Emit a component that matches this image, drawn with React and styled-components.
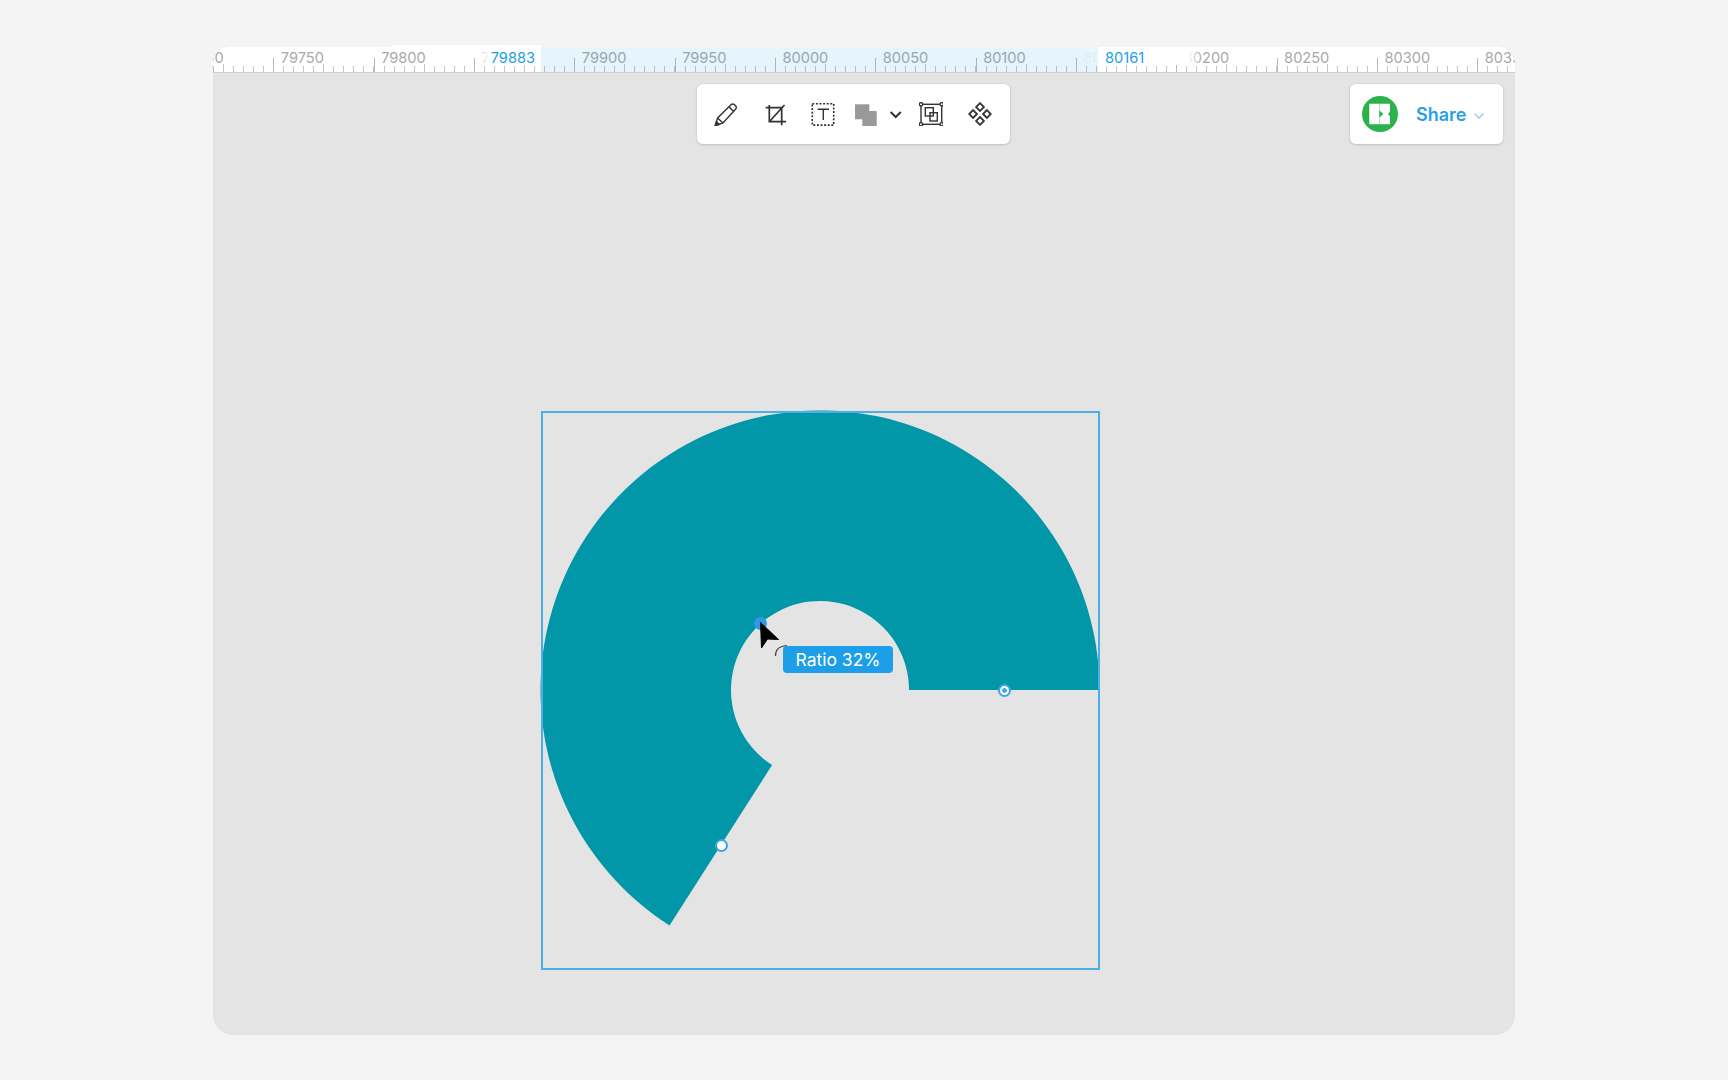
import React from "react";
import styled, { createGlobalStyle } from "styled-components";

const TICKS = [79700, 79750, 79800, 79850, 79900, 79950, 80000, 80050, 80100, 80150, 80200, 80250, 80300, 80350];

const GlobalStyle = createGlobalStyle`
    html, body {
        margin: 0;
        background: #f4f4f4;
    }
    body {
        font-family: Inter, "Liberation Sans", sans-serif;
    }
`;

const Page = styled.div`
    box-sizing: border-box;
    width: 1728px;
    height: 1080px;
    padding: 47px 213px 45px;
`;

const Canvas = styled.div`
    position: relative;
    height: 988px;
    background: #e4e4e4;
    border-radius: 16px 16px 20px 20px;
`;

const Ruler = styled.div`
    position: relative;
    height: 25px;
    background: #fff;
    border-bottom: 1px solid #cfcfcf;
    border-radius: 16px 16px 0 0;
`;

const RulerClip = styled.div`
    height: 100%;
    overflow: hidden;
    border-radius: 16px 16px 0 0;
`;

const RulerTrack = styled.div`
    display: flex;
    margin-left: -40px;
    height: 100%;
`;

const RulerCell = styled.div`
    position: relative;
    flex: 0 0 100.33px;
    box-sizing: border-box;
    padding: 2px 0 0 7.5px;
    font-size: 14.6px;
    line-height: 18px;
    color: #a9a9a9;
    white-space: nowrap;
    background: repeating-linear-gradient(to right, #c4c4c4 0 1px, transparent 1px 10.033px) left bottom / 100% 6px no-repeat;

    &::before {
        content: "";
        position: absolute;
        left: 0;
        bottom: 0;
        width: 1px;
        height: 14px;
        background: #b8b8b8;
    }

    &::after {
        content: "";
        position: absolute;
        left: 50px;
        bottom: 0;
        width: 1px;
        height: 8px;
        background: #c4c4c4;
    }
`;

const RulerBand = styled.div`
    position: absolute;
    left: 328px;
    top: 0;
    width: 557px;
    height: 25px;
    background: rgba(28, 158, 232, 0.11);
`;

const RulerVeil = styled.div`
    position: absolute;
    left: 871px;
    top: 0;
    width: 14px;
    height: 18px;
    background: rgba(231, 245, 253, 0.88);
`;

const RulerBump = styled.div`
    position: absolute;
    left: 180px;
    top: -2px;
    width: 148px;
    height: 2px;
    background: #fff;
`;

const RulerMark = styled.div`
    position: absolute;
    top: 0;
    left: ${({ $left }) => $left}px;
    width: ${({ $width }) => $width}px;
    height: 18px;
    box-sizing: border-box;
    padding: 2px ${({ $end }) => ($end ? "6px" : "0")} 0 ${({ $end }) => ($end ? "0" : "7px")};
    text-align: ${({ $end }) => ($end ? "right" : "left")};
    font-size: 14.6px;
    line-height: 18px;
    color: #1c9ee8;
    background: linear-gradient(${({ $end }) => ($end ? "to left" : "to right")}, #fff 0, #fff ${({ $solid }) => $solid}px, rgba(255, 255, 255, 0) 100%);
`;

const TopRow = styled.div`
    display: flex;
    justify-content: space-between;
    padding: 11px 12px 0 484px;
`;

const Panel = styled.div`
    display: flex;
    align-items: center;
    box-sizing: border-box;
    height: 60px;
    background: #fff;
    border-radius: 6px;
    box-shadow: 0 0 0 1px rgba(0, 0, 0, 0.03), 0 1px 3px rgba(0, 0, 0, 0.12);
`;

const Toolbar = styled(Panel)`
    width: 313px;
    padding-left: 5px;
`;

const ToolButton = styled.div`
    display: flex;
    align-items: center;
    justify-content: center;
    flex: 0 0 ${({ $w }) => $w}px;
    min-width: 0;
    height: 100%;

    svg {
        display: block;
        flex: none;
        fill: none;
        stroke: #333;
        stroke-width: ${({ $stroke }) => $stroke || 1.4};
    }
`;

const SharePanel = styled(Panel)`
    width: 153px;
    padding-left: 12px;
`;

const Avatar = styled.div`
    flex: 0 0 36px;
    height: 36px;
    border-radius: 50%;
    background: #2bb24a;

    svg {
        display: block;
    }
`;

const ShareLabel = styled.div`
    margin-left: 18px;
    font-size: 18px;
    font-weight: 600;
    color: #2a9fe8;
`;

const ShareCaret = styled.svg`
    margin-left: 8px;
    margin-top: 3px;
`;

const Frame = styled.div`
    position: absolute;
    left: 328px;
    top: 364px;
    width: 558px;
    height: 558px;

    &::after {
        content: "";
        position: absolute;
        inset: -0.5px -1px -1px -0.5px;
        border: 2px solid #4aafe6;
        pointer-events: none;
    }
`;

const Shape = styled.svg`
    display: block;
    overflow: visible;
`;

const Handle = styled.div`
    position: absolute;
    z-index: 1;
    left: ${({ $x }) => $x}px;
    top: ${({ $y }) => $y}px;
    box-sizing: border-box;
    width: 13px;
    height: 13px;
    margin: -6.5px 0 0 -6.5px;
    border-radius: 50%;
    border: 2px solid #3aa6ea;
    background: ${({ $dot }) => ($dot ? "radial-gradient(circle, #3aa6ea 0 2px, #fff 2.6px)" : "#fff")};
`;

const RatioDot = styled.div`
    position: absolute;
    left: 213px;
    top: 206px;
    width: 13px;
    height: 13px;
    border-radius: 50%;
    background: #2b9be8;
`;

const Pointer = styled.svg`
    position: absolute;
    left: 218px;
    top: 210px;
    z-index: 2;
`;

const Tooltip = styled.div`
    position: absolute;
    left: 242px;
    top: 235px;
    width: 110px;
    height: 27px;
    border-radius: 4px;
    background: #1c9ee8;
    color: #fff;
    font-size: 17.5px;
    line-height: 28px;
    text-align: center;
`;

const App = () => {
    return (
        <React.Fragment>
            <GlobalStyle />
            <Page>
                <Canvas>
                    <Ruler>
                        <RulerClip>
                            <RulerTrack>
                                {TICKS.map((tick) => (
                                    <RulerCell key={tick}>{tick}</RulerCell>
                                ))}
                            </RulerTrack>
                        </RulerClip>
                        <RulerBand />
                        <RulerVeil />
                        <RulerBump />
                        <RulerMark $end $left={262} $width={66} $solid={52}>79883</RulerMark>
                        <RulerMark $left={885} $width={104} $solid={90}>80161</RulerMark>
                    </Ruler>

                    <TopRow>
                        <Toolbar>
                            <ToolButton $w={48}>
                                <svg width="24" height="24" viewBox="0 0 24 24">
                                    <path d="M1.2 23.6 3.6 16 17 2.8a2.5 2.5 0 0 1 3.5 0l1 1a2.5 2.5 0 0 1 0 3.5L9 20.9Z" />
                                    <path d="M3.6 16 9 20.9M15 4.8l5 5" />
                                    <path d="M1.2 23.6l1.2-4 2.9 2.8Z" fill="#333" />
                                </svg>
                            </ToolButton>
                            <ToolButton $w={50} $stroke={1.7}>
                                <svg width="24" height="24" viewBox="0 0 24 24">
                                    <path d="M2.7 5.7H18.7V23.3M6.3 3V19.7H23M6.3 19.7 21.5 3" />
                                </svg>
                            </ToolButton>
                            <ToolButton $w={46}>
                                <svg width="24" height="24" viewBox="0 0 24 24">
                                    <rect x="1.3" y="1.7" width="21.4" height="21.4" strokeDasharray="2 1.6" style={{ strokeWidth: 1.6 }} />
                                    <path d="M6.7 7.3H18M12.3 7.3V18" />
                                </svg>
                            </ToolButton>
                            <ToolButton $w={40}>
                                <svg width="24" height="24" viewBox="0 0 24 24">
                                    <rect x="1" y="2.3" width="14.3" height="15" fill="#999" stroke="none" />
                                    <rect x="8.3" y="9" width="14.4" height="15" fill="#999" stroke="none" />
                                </svg>
                            </ToolButton>
                            <ToolButton $w={20} $stroke={2}>
                                <svg width="24" height="24" viewBox="0 0 24 24">
                                    <path d="M6.6 10 11.7 15 16.8 10" />
                                </svg>
                            </ToolButton>
                            <ToolButton $w={50}>
                                <svg width="24" height="24" viewBox="0 0 24 24">
                                    <rect x="2" y="2.3" width="20.7" height="20" />
                                    <rect x="6.3" y="5.7" width="8" height="8.3" />
                                    <rect x="11" y="10.7" width="7.3" height="8.3" />
                                    <circle cx="2" cy="2.3" r="1.7" fill="#fff" />
                                    <circle cx="22.7" cy="2.3" r="1.7" fill="#fff" />
                                    <circle cx="2" cy="22.3" r="1.7" fill="#fff" />
                                    <circle cx="22.7" cy="22.3" r="1.7" fill="#fff" />
                                </svg>
                            </ToolButton>
                            <ToolButton $w={48} $stroke={1.8}>
                                <svg width="24" height="24" viewBox="0 0 24 24">
                                    <path d="M12 1.2 15.9 5.1 12 9 8.1 5.1Z" />
                                    <path d="M12 15 15.9 18.9 12 22.8 8.1 18.9Z" />
                                    <path d="M5.1 8.1 9 12 5.1 15.9 1.2 12Z" />
                                    <path d="M18.9 8.1 22.8 12 18.9 15.9 15 12Z" />
                                </svg>
                            </ToolButton>
                        </Toolbar>

                        <SharePanel>
                            <Avatar>
                                <svg width="36" height="36" viewBox="0 0 36 36">
                                    <path d="M7.3 7.7H28V15.6L26 18 28 20.4V28.3H7.3Z" fill="#fff" />
                                    <path d="M17.3 14.6 21.4 18 17.3 21.4Z" fill="#2bb24a" />
                                    <path d="M17.6 7.7V28.3" stroke="#2bb24a" strokeWidth=".7" strokeOpacity=".6" />
                                </svg>
                            </Avatar>
                            <ShareLabel>Share</ShareLabel>
                            <ShareCaret width="10" height="6" viewBox="0 0 10 6">
                                <path d="M.6.6 5 5 9.4.6" fill="none" stroke="#8cc8ee" strokeWidth="1.3" />
                            </ShareCaret>
                        </SharePanel>
                    </TopRow>

                    <Frame>
                        <Shape width="558" height="558" viewBox="0 0 558 558">
                            <path
                                d="M558.5 279A279.5 279.5 0 1 0 128.5 514.4L231.1 354A89 89 0 1 1 368 279Z"
                                fill="#0297a8"
                            />
                        </Shape>
                        <Handle $x={463} $y={279} $dot />
                        <Handle $x={180} $y={434} />
                        <RatioDot />
                        <Pointer width="44" height="50" viewBox="0 0 44 50">
                            <path d="M1.5 1.5 2.5 27 8.5 18 19.5 18.5Z" fill="#000" stroke="#000" strokeWidth="1" />
                            <path d="M16.5 35C16.5 29 19 25.5 28 24.5" fill="none" stroke="#444" strokeWidth="1.2" />
                        </Pointer>
                        <Tooltip>Ratio 32%</Tooltip>
                    </Frame>
                </Canvas>
            </Page>
        </React.Fragment>
    );
};

export default App;
